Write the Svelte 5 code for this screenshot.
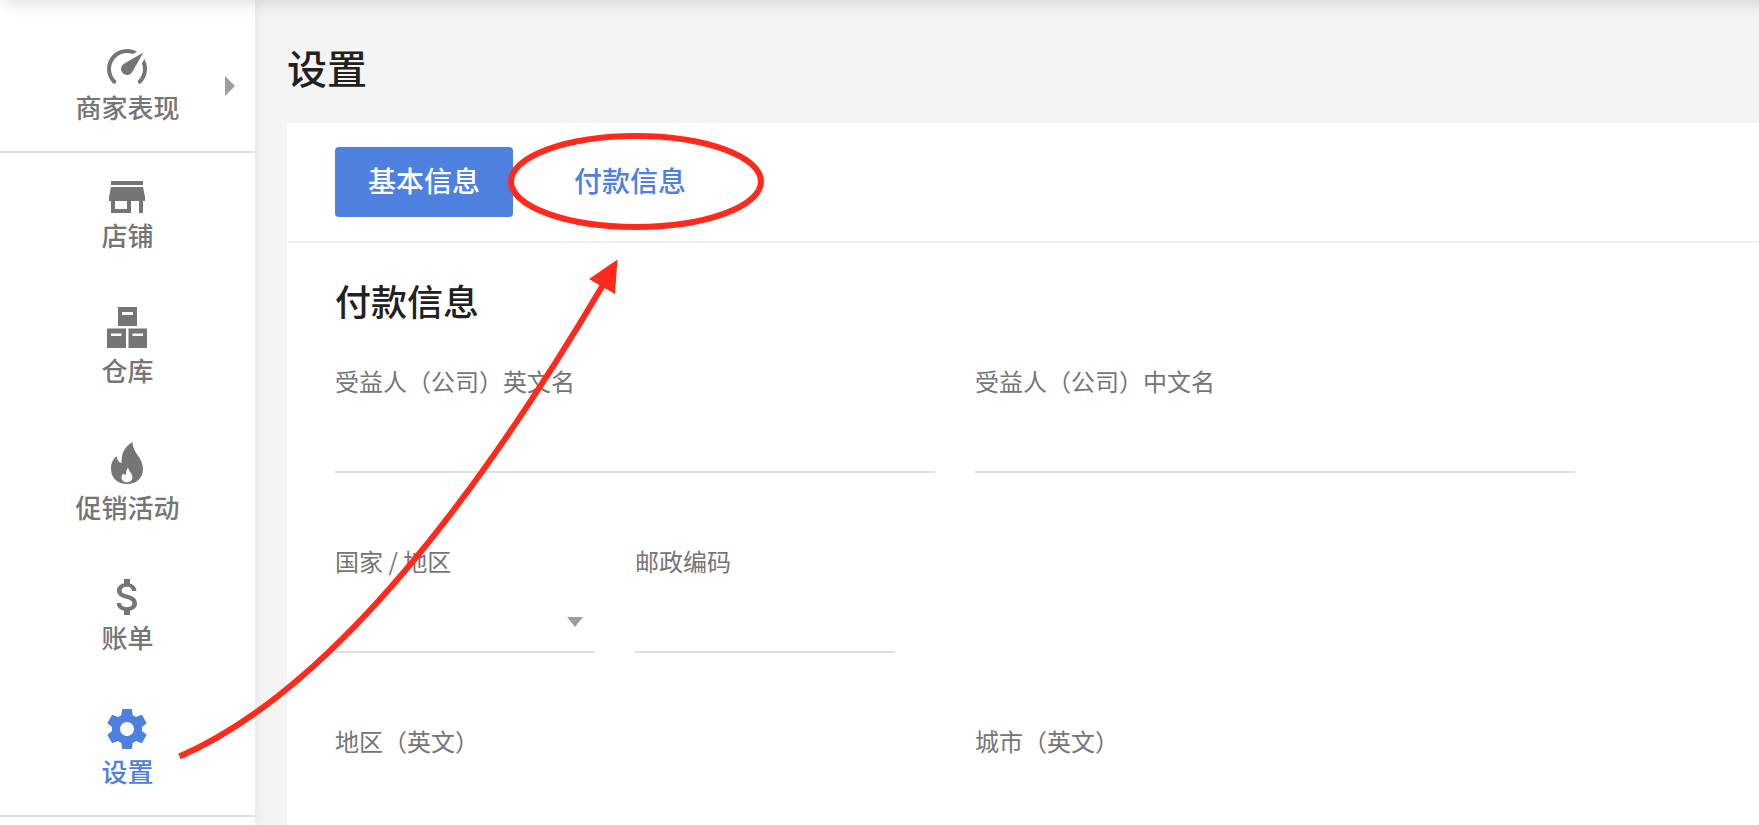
<script lang="ts">
  interface NavItem {
    id: string;
    label: string;
    width: number;
    height: number;
    viewBox: string;
    path: string;
    expandable?: boolean;
    divider?: boolean;
  }

  interface Field {
    id: string;
    label: string;
    type: "text" | "select";
    narrow?: boolean;
  }

  const navItems: NavItem[] = [
    {
      id: "performance",
      label: "商家表现",
      width: 40,
      height: 36,
      viewBox: "2 3 20 18",
      path: "M12,16A3,3 0 0,1 9,13C9,11.88 9.61,10.9 10.5,10.39L20.21,4.77L14.68,14.35C14.18,15.33 13.17,16 12,16M12,3C13.81,3 15.5,3.5 16.97,4.32L14.87,5.53C14,5.19 13,5 12,5A8,8 0 0,0 4,13C4,15.21 4.89,17.21 6.34,18.65H6.35C6.74,19.04 6.74,19.67 6.35,20.06C5.96,20.45 5.32,20.45 4.93,20.07V20.07C3.12,18.26 2,15.76 2,13A10,10 0 0,1 12,3M22,13C22,15.76 20.88,18.26 19.07,20.07V20.07C18.68,20.45 18.05,20.45 17.66,20.06C17.27,19.67 17.27,19.04 17.66,18.65V18.65C19.11,17.2 20,15.21 20,13C20,12 19.81,11 19.46,10.1L20.67,8C21.5,9.5 22,11.18 22,13Z",
      expandable: true,
      divider: true,
    },
    {
      id: "store",
      label: "店铺",
      width: 36,
      height: 32,
      viewBox: "3 4 18 16",
      path: "M20 4H4v2h16V4zm1 10v-2l-1-5H4l-1 5v2h1v6h10v-6h4v6h2v-6h1zm-9 4H6v-4h6v4z",
    },
    {
      id: "warehouse",
      label: "仓库",
      width: 40,
      height: 41,
      viewBox: "0 0 40 41",
      path: "M11 0H30V19H11ZM15 5V8H26V5ZM0 21.5H19V41H0ZM4 26.5V29H14.5V26.5ZM21.5 21.5H40V41H21.5ZM25.5 26.5V29H36V26.5Z",
    },
    {
      id: "promotion",
      label: "促销活动",
      width: 32,
      height: 43,
      viewBox: "0 0 32 43",
      path: "M21.3 0C22 12 32 15 32 27C32 36 25 42 16 42C7 42 0 36 0 27C0 21 2 17 5.8 14.3C6 18 7.5 20.5 10.6 21C10.8 17 9.5 8 21.3 0ZM17 25.7C15.2 27.6 15 30 14.8 33C13.4 32.7 12.7 32 12.3 31.5C11 33 10.5 34 10.5 35.5C10.5 38.5 13 40.4 16 40.4C19 40.4 21.4 38.5 21.4 35C21.4 31.5 18 29.5 17 25.7Z",
    },
    {
      id: "billing",
      label: "账单",
      width: 22,
      height: 36,
      viewBox: "6 3 11 18",
      path: "M11.8 10.9c-2.27-.59-3-1.2-3-2.15 0-1.09 1.01-1.85 2.7-1.85 1.78 0 2.44.85 2.5 2.1h2.21c-.07-1.72-1.12-3.3-3.21-3.81V3h-3v2.16c-1.94.42-3.5 1.68-3.5 3.61 0 2.31 1.91 3.46 4.7 4.13 2.5.6 3 1.48 3 2.41 0 .69-.49 1.79-2.7 1.79-2.06 0-2.87-.92-2.98-2.1h-2.2c.12 2.19 1.76 3.42 3.68 3.83V21h3v-2.15c1.95-.37 3.5-1.5 3.5-3.55 0-2.84-2.43-3.81-4.7-4.4z",
    },
    {
      id: "settings",
      label: "设置",
      width: 40,
      height: 40,
      viewBox: "2 2 20 20",
      path: "M12,15.5A3.5,3.5 0 0,1 8.5,12A3.5,3.5 0 0,1 12,8.5A3.5,3.5 0 0,1 15.5,12A3.5,3.5 0 0,1 12,15.5M19.43,12.97C19.47,12.65 19.5,12.33 19.5,12C19.5,11.67 19.47,11.34 19.43,11L21.54,9.37C21.73,9.22 21.78,8.95 21.66,8.73L19.66,5.27C19.54,5.05 19.27,4.96 19.05,5.05L16.56,6.05C16.04,5.66 15.5,5.32 14.87,5.07L14.5,2.42C14.46,2.18 14.25,2 14,2H10C9.75,2 9.54,2.18 9.5,2.42L9.13,5.07C8.5,5.32 7.96,5.66 7.44,6.05L4.95,5.05C4.73,4.96 4.46,5.05 4.34,5.27L2.34,8.73C2.21,8.95 2.27,9.22 2.46,9.37L4.57,11C4.53,11.34 4.5,11.67 4.5,12C4.5,12.33 4.53,12.65 4.57,12.97L2.46,14.63C2.27,14.78 2.21,15.05 2.34,15.27L4.34,18.73C4.46,18.95 4.73,19.03 4.95,18.95L7.44,17.94C7.96,18.34 8.5,18.68 9.13,18.93L9.5,21.58C9.54,21.82 9.75,22 10,22H14C14.25,22 14.46,21.82 14.5,21.58L14.87,18.93C15.5,18.67 16.04,18.34 16.56,17.94L19.05,18.95C19.27,19.03 19.54,18.95 19.66,18.73L21.66,15.27C21.78,15.05 21.73,14.78 21.54,14.63L19.43,12.97Z",
      divider: true,
    },
  ];

  const tabs = [
    { id: "basic", label: "基本信息" },
    { id: "payment", label: "付款信息" },
  ];

  const rows: Field[][] = [
    [
      { id: "beneficiary-en", label: "受益人（公司）英文名", type: "text" },
      { id: "beneficiary-zh", label: "受益人（公司）中文名", type: "text" },
    ],
    [
      { id: "country", label: "国家 / 地区", type: "select", narrow: true },
      { id: "postcode", label: "邮政编码", type: "text", narrow: true },
    ],
    [
      { id: "region-en", label: "地区（英文）", type: "text" },
      { id: "city-en", label: "城市（英文）", type: "text" },
    ],
  ];

  let activeNav = $state("settings");
  let activeTab = $state("basic");
</script>

<div class="page">
  <nav class="sidebar">
    {#each navItems as item (item.id)}
      <a
        class="nav-item"
        class:active={activeNav === item.id}
        class:divider={item.divider}
        href="#{item.id}"
        onclick={() => (activeNav = item.id)}
      >
        <span class="nav-body">
          <svg
            width={item.width}
            height={item.height}
            viewBox={item.viewBox}
            aria-hidden="true"
          >
            <path d={item.path} fill="currentColor" fill-rule="evenodd" />
          </svg>
          <span>{item.label}</span>
        </span>
        {#if item.expandable}
          <svg class="chevron" width="10" height="20" viewBox="0 0 10 20" aria-hidden="true">
            <path d="M0 0L10 10L0 20Z" fill="#9e9e9e" />
          </svg>
        {/if}
      </a>
    {/each}
  </nav>

  <main class="content">
    <h1>设置</h1>
    <div class="card">
      <div class="tabs">
        {#each tabs as tab (tab.id)}
          <button
            type="button"
            class="tab"
            class:selected={activeTab === tab.id}
            onclick={() => (activeTab = tab.id)}
          >
            {tab.label}
          </button>
        {/each}
      </div>

      <form class="form">
        <h2>付款信息</h2>
        {#each rows as row}
          <div class="row">
            {#each row as field (field.id)}
              <div class="field" class:narrow={field.narrow}>
                <label for={field.id}>{field.label}</label>
                {#if field.type === "select"}
                  <div class="select-wrap">
                    <select id={field.id}>
                      <option value=""></option>
                    </select>
                    <svg width="16" height="10" viewBox="0 0 16 10" aria-hidden="true">
                      <path d="M0 0H16L8 10Z" fill="#9e9e9e" />
                    </svg>
                  </div>
                {:else}
                  <input id={field.id} type="text" />
                {/if}
              </div>
            {/each}
          </div>
        {/each}
      </form>
    </div>
  </main>

  <div class="top-shadow"></div>

  <!-- guide: from the settings entry to the payment tab -->
  <svg class="guide" width="800" height="800" viewBox="0 0 800 800" aria-hidden="true">
    <ellipse cx="636" cy="181.5" rx="125" ry="45.5" />
    <path d="M179.5 756.5Q374 672 603 285" />
    <polygon points="617.5,259.5 589,279 615,294" />
  </svg>
</div>

<style>
  :global(body) {
    margin: 0;
  }

  .page {
    position: relative;
    display: flex;
    height: 100vh;
    overflow: hidden;
    background: #f4f4f4;
    color: #212121;
    font-family: "Noto Sans CJK SC", sans-serif;
  }

  .sidebar {
    position: relative;
    flex: 0 0 255px;
    box-sizing: border-box;
    padding-top: 21px;
    background: #fff;
    box-shadow: 0 0 12px rgba(0, 0, 0, 0.08);
  }

  .nav-item {
    display: grid;
    grid-template-columns: 1fr auto 1fr;
    align-items: center;
    padding: 28px 20px;
    color: #757575;
    font-size: 26px;
    font-weight: 500;
    line-height: 32px;
    text-decoration: none;
  }

  .nav-item.divider {
    border-bottom: 2px solid #e0e0e0;
  }

  .nav-item.active {
    color: #4e80e0;
  }

  .nav-body {
    grid-column: 2;
    display: flex;
    flex-direction: column;
    align-items: center;
    gap: 6px;
  }

  .chevron {
    justify-self: end;
  }

  .content {
    flex: 1;
    min-width: 0;
    padding: 39px 0 0 32px;
    overflow-y: auto;
    scrollbar-width: none;
  }

  h1 {
    margin: 0 0 28px;
    font-size: 40px;
    font-weight: 500;
    line-height: 56px;
  }

  .card {
    background: #fff;
  }

  .tabs {
    display: flex;
    gap: 28px;
    padding: 24px 48px;
    border-bottom: 2px solid #efefef;
  }

  .tab {
    min-width: 178px;
    height: 70px;
    padding: 0 32px 4px;
    border: 0;
    border-radius: 4px;
    background: transparent;
    color: #4e80e0;
    font-family: inherit;
    font-size: 28px;
    font-weight: 500;
    cursor: pointer;
  }

  .tab.selected {
    background: #4e80e0;
    color: #fff;
  }

  .form {
    padding: 33px 48px 48px;
  }

  h2 {
    margin: 0 0 41px;
    font-size: 36px;
    font-weight: 500;
    line-height: 48px;
  }

  .row {
    display: flex;
    gap: 40px;
    margin-bottom: 72px;
  }

  .field {
    flex: 0 1 600px;
    min-width: 0;
  }

  .field.narrow {
    flex-basis: 260px;
  }

  label {
    display: block;
    color: #757575;
    font-size: 24px;
    font-weight: 400;
    line-height: 32px;
  }

  input,
  select {
    display: block;
    box-sizing: border-box;
    width: 100%;
    height: 76px;
    padding: 0;
    border: 0;
    border-bottom: 2px solid #e0e0e0;
    border-radius: 0;
    outline: none;
    appearance: none;
    background: transparent;
    color: #212121;
    font-family: inherit;
    font-size: 28px;
  }

  .select-wrap {
    position: relative;
  }

  .select-wrap svg {
    position: absolute;
    top: 40px;
    right: 12px;
    pointer-events: none;
  }

  .top-shadow {
    position: absolute;
    top: -20px;
    right: -20px;
    left: 4px;
    height: 20px;
    box-shadow: 0 4px 16px rgba(0, 0, 0, 0.12);
    pointer-events: none;
  }

  .guide {
    position: absolute;
    top: 0;
    left: 0;
    pointer-events: none;
  }

  .guide ellipse,
  .guide path {
    fill: none;
    stroke: #ff2a1c;
    stroke-width: 6;
  }

  .guide polygon {
    fill: #ff2a1c;
  }
</style>
